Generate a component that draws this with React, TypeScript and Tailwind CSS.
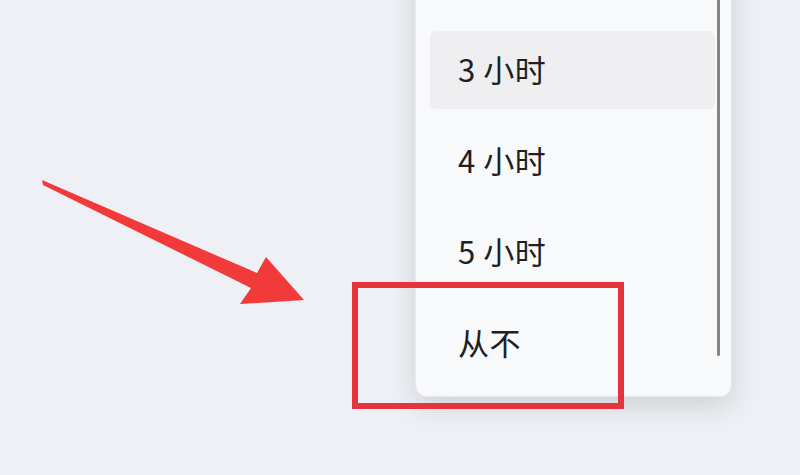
const items = ['', '3 小时', '4 小时', '5 小时', '从不'];

export default function App() {
  return (
    <div className="relative w-[800px] h-[475px] overflow-hidden bg-[#eff0f5] font-['Segoe_UI','Noto_Sans_CJK_SC',sans-serif]">
      {/* dropdown menu */}
      <div className="absolute left-[415px] top-[-68px] w-[317px] h-[465px] rounded-[12px] bg-[#f8f9fb] border border-[#e8e9ee] shadow-[0_10px_28px_rgba(0,0,0,0.13)] flex">
        <div className="flex flex-col w-[301px] pl-[14px] pr-[2px]">
          {items.map((label, i) => (
            <div key={i} className="h-[91px] py-[6.5px]">
              <div
                className={`h-full rounded-[6px] flex items-center pl-[28px] text-[31px] tracking-[0.5px] text-[#202020] ${
                  label === '3 小时' ? 'bg-[#efeff1]' : ''
                }`}
              >
                {label}
              </div>
            </div>
          ))}
        </div>
        <div className="pt-[60px]">
          <div className="w-[3px] h-[363px] rounded-full bg-[#858585]" />
        </div>
      </div>

      {/* highlight box */}
      <div className="absolute left-[352px] top-[282px] w-[272px] h-[127px] border-[6px] border-[#e5343b]" />

      {/* arrow */}
      <svg className="absolute left-0 top-0" width="800" height="475" viewBox="0 0 800 475">
        <polygon
          points="42,180 257,273 266,257 304,300 240,304 251,288 43,185"
          fill="#f23a3a"
        />
      </svg>
    </div>
  );
}
